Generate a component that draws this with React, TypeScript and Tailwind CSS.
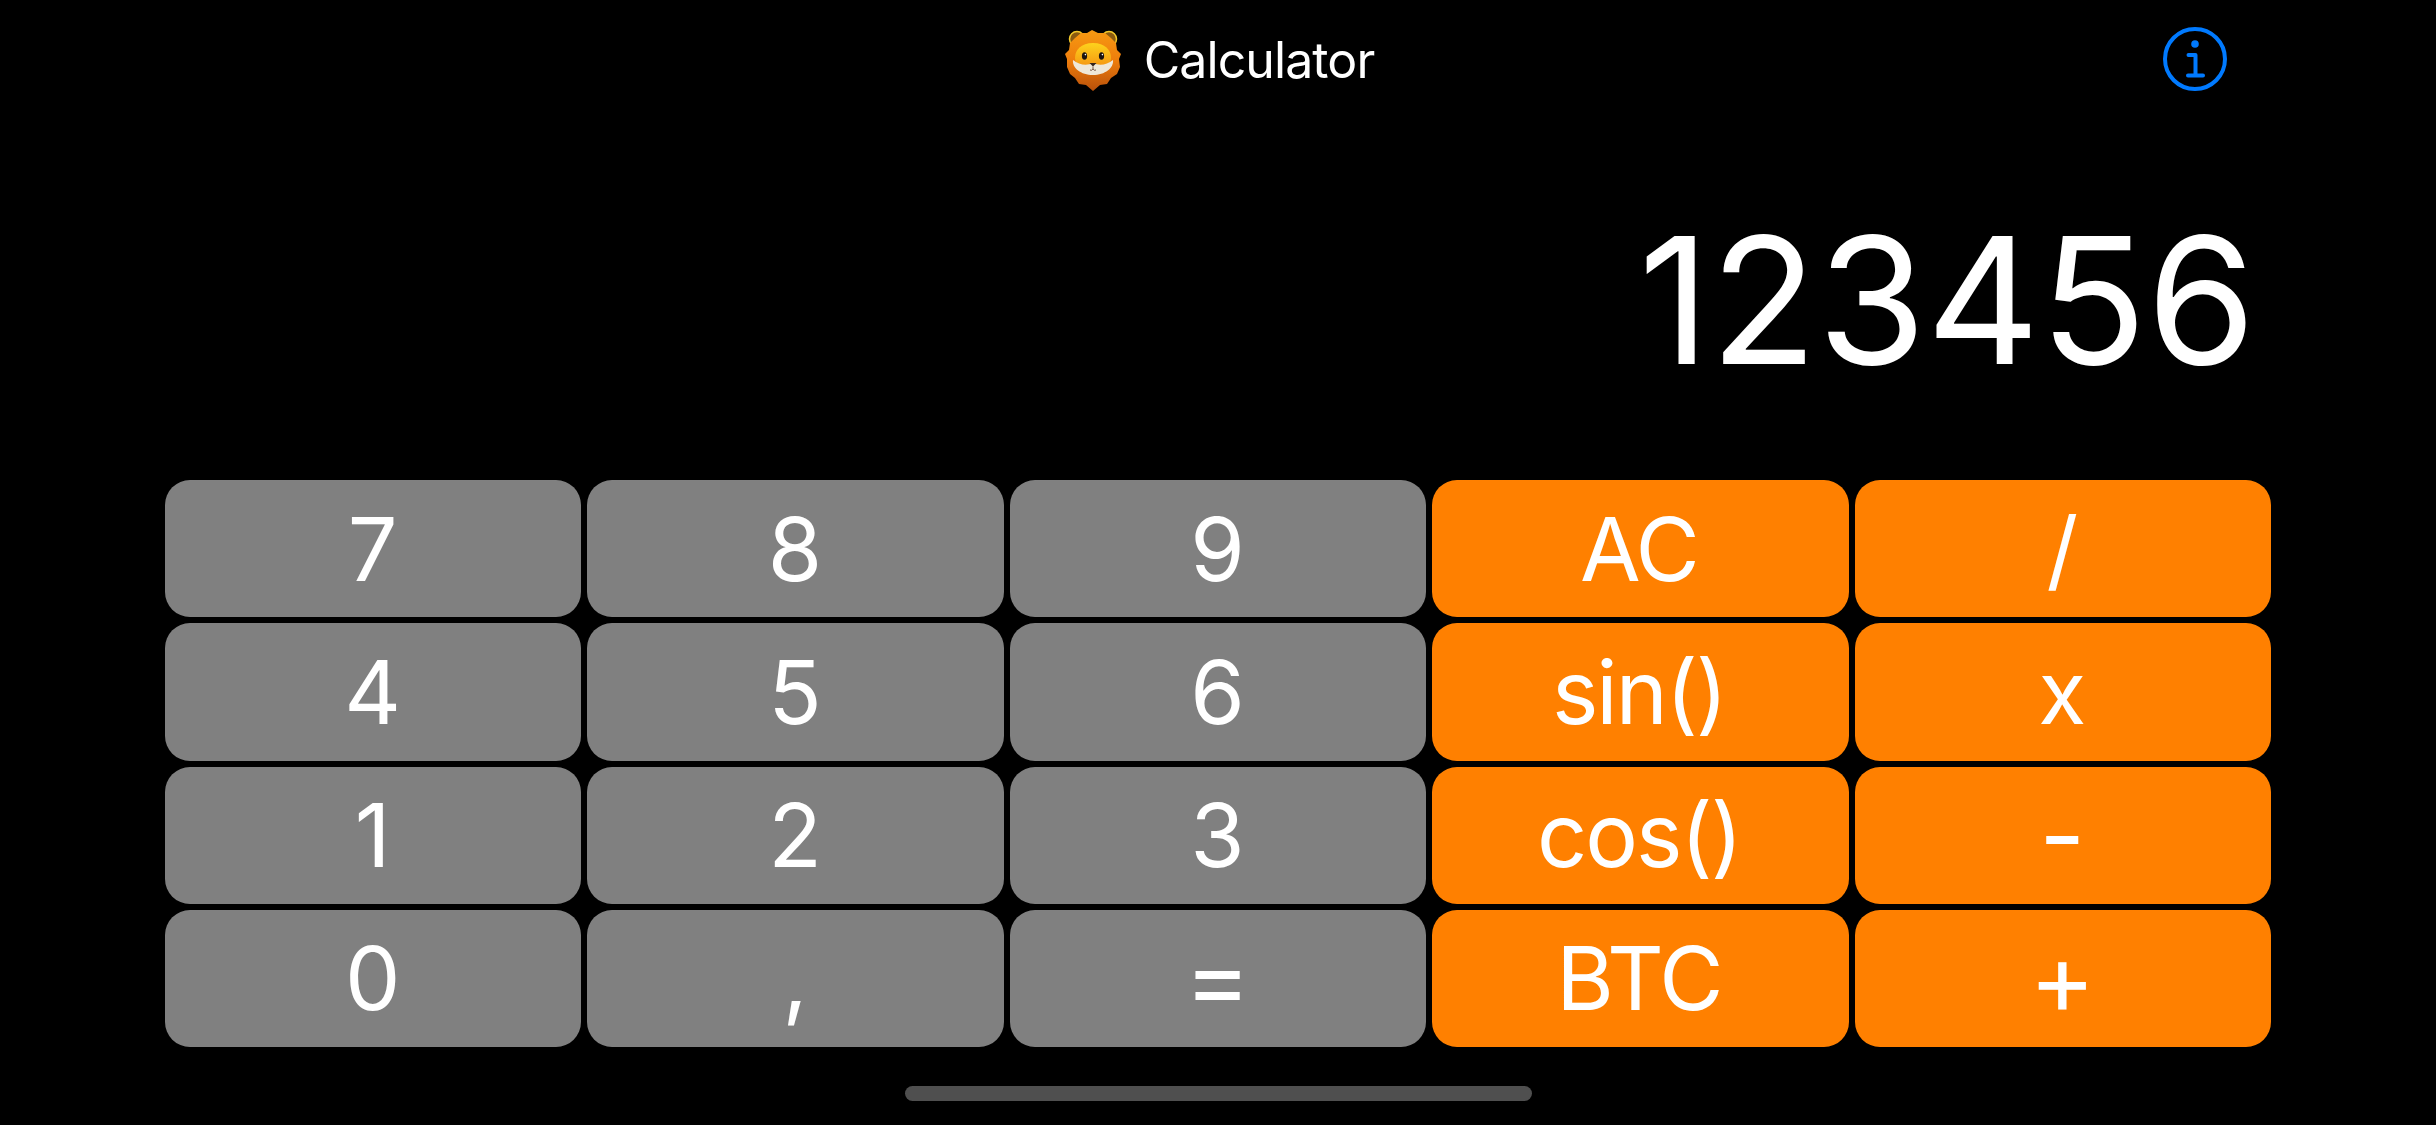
import React from 'react';

const keys = [
  { label: '7' }, { label: '8' }, { label: '9' }, { label: 'AC', op: true }, { label: '/', op: true },
  { label: '4' }, { label: '5' }, { label: '6' }, { label: 'sin()', op: true }, { label: 'x', op: true },
  { label: '1' }, { label: '2' }, { label: '3' }, { label: 'cos()', op: true }, { label: '-', op: true, big: true },
  { label: '0' }, { label: ',' }, { label: '=', big: true }, { label: 'BTC', op: true }, { label: '+', op: true, big: true },
];

const LionIcon = () => (
  <svg width="56" height="61" viewBox="0 0 56 61">
    <defs>
      <linearGradient id="mane" x1="0" y1="0" x2="0" y2="1">
        <stop offset="0" stopColor="#f79a12" />
        <stop offset="0.5" stopColor="#ee7d0c" />
        <stop offset="1" stopColor="#b8500a" />
      </linearGradient>
      <linearGradient id="face" x1="0" y1="0" x2="0" y2="1">
        <stop offset="0" stopColor="#fdd21c" />
        <stop offset="1" stopColor="#f59412" />
      </linearGradient>
    </defs>
    <circle cx="12" cy="9" r="7.5" fill="#8a5a10" stroke="#f4c92a" strokeWidth="1.5" />
    <circle cx="44" cy="9" r="7.5" fill="#8a5a10" stroke="#f4c92a" strokeWidth="1.5" />
    <path d="M27 0 L33 3 L40 3 L46 8 L51 13 L52 20 L56 24 L54 29 L55 37 L52 44 L46 48 L42 54 L35 55 L28 61 L21 55 L14 54 L10 48 L5 44 L2 37 L2 29 L0 24 L4 20 L5 13 L10 8 L16 3 L22 3 Z" fill="url(#mane)" />
    <path d="M28 13 C40 13 46 20 46 28 C46 35 38 38 28 38 C18 38 10 35 10 28 C10 20 16 13 28 13 Z" fill="url(#face)" />
    <path d="M8 30 C14 35 22 36 28 33 C34 36 42 35 48 30 C49 38 40 45 28 45 C16 45 7 38 8 30 Z" fill="#efe8d8" />
    <ellipse cx="19.5" cy="26" rx="2.6" ry="3.8" fill="#1c1410" />
    <ellipse cx="36.5" cy="26" rx="2.6" ry="3.8" fill="#1c1410" />
    <circle cx="20.4" cy="24.6" r="0.8" fill="#ffffff" />
    <circle cx="37.4" cy="24.6" r="0.8" fill="#ffffff" />
    <path d="M24.5 33 H31.5 L28 36.5 Z" fill="#33231c" />
    <path d="M28 36.5 V39 M25 40 Q26.5 41 28 39 Q29.5 41 31 40" stroke="#6b4a38" strokeWidth="0.9" fill="none" />
  </svg>
);

const InfoIcon = () => (
  <svg width="66" height="66" viewBox="0 0 66 66" fill="none">
    <circle cx="33" cy="33" r="30" stroke="#007aff" strokeWidth="4" />
    <circle cx="33" cy="18" r="3.8" fill="#007aff" />
    <path d="M26.5 29 H33.5 V49 M26 49.5 H41" stroke="#007aff" strokeWidth="4" strokeLinecap="round" strokeLinejoin="round" />
  </svg>
);

const App: React.FC = () => {
  return (
    <div className="w-[2436px] h-[1125px] bg-black text-white flex flex-col overflow-hidden font-['Inter',sans-serif]">
      <header className="relative h-[120px] pl-[3px] flex items-center justify-center gap-[23px] shrink-0">
        <LionIcon />
        <span className="text-[50px] leading-none tracking-[-0.9px]">Calculator</span>
        <div className="absolute left-[2162px] top-[26px]">
          <InfoIcon />
        </div>
      </header>

      <div className="h-[360px] shrink-0 flex items-center justify-end pr-[180px]">
        <span className="text-[176px] leading-none font-normal">123456</span>
      </div>

      <div className="ml-[165px] w-[2106px] h-[567px] grid grid-cols-5 grid-rows-4 gap-[6px] shrink-0">
        {keys.map((key) => (
          <button
            key={key.label}
            className={`rounded-[25px] pr-[3px] flex items-center justify-center leading-none font-normal tracking-[-2px] ${key.big ? 'text-[100px]' : 'text-[88px]'} ${key.op ? 'bg-[#ff8000]' : 'bg-[#808080]'}`}
          >
            {key.label}
          </button>
        ))}
      </div>

      <div className="mt-[39px] mx-auto w-[627px] h-[15px] rounded-full bg-[#4f4f4f]" />
    </div>
  );
};

export default App;
